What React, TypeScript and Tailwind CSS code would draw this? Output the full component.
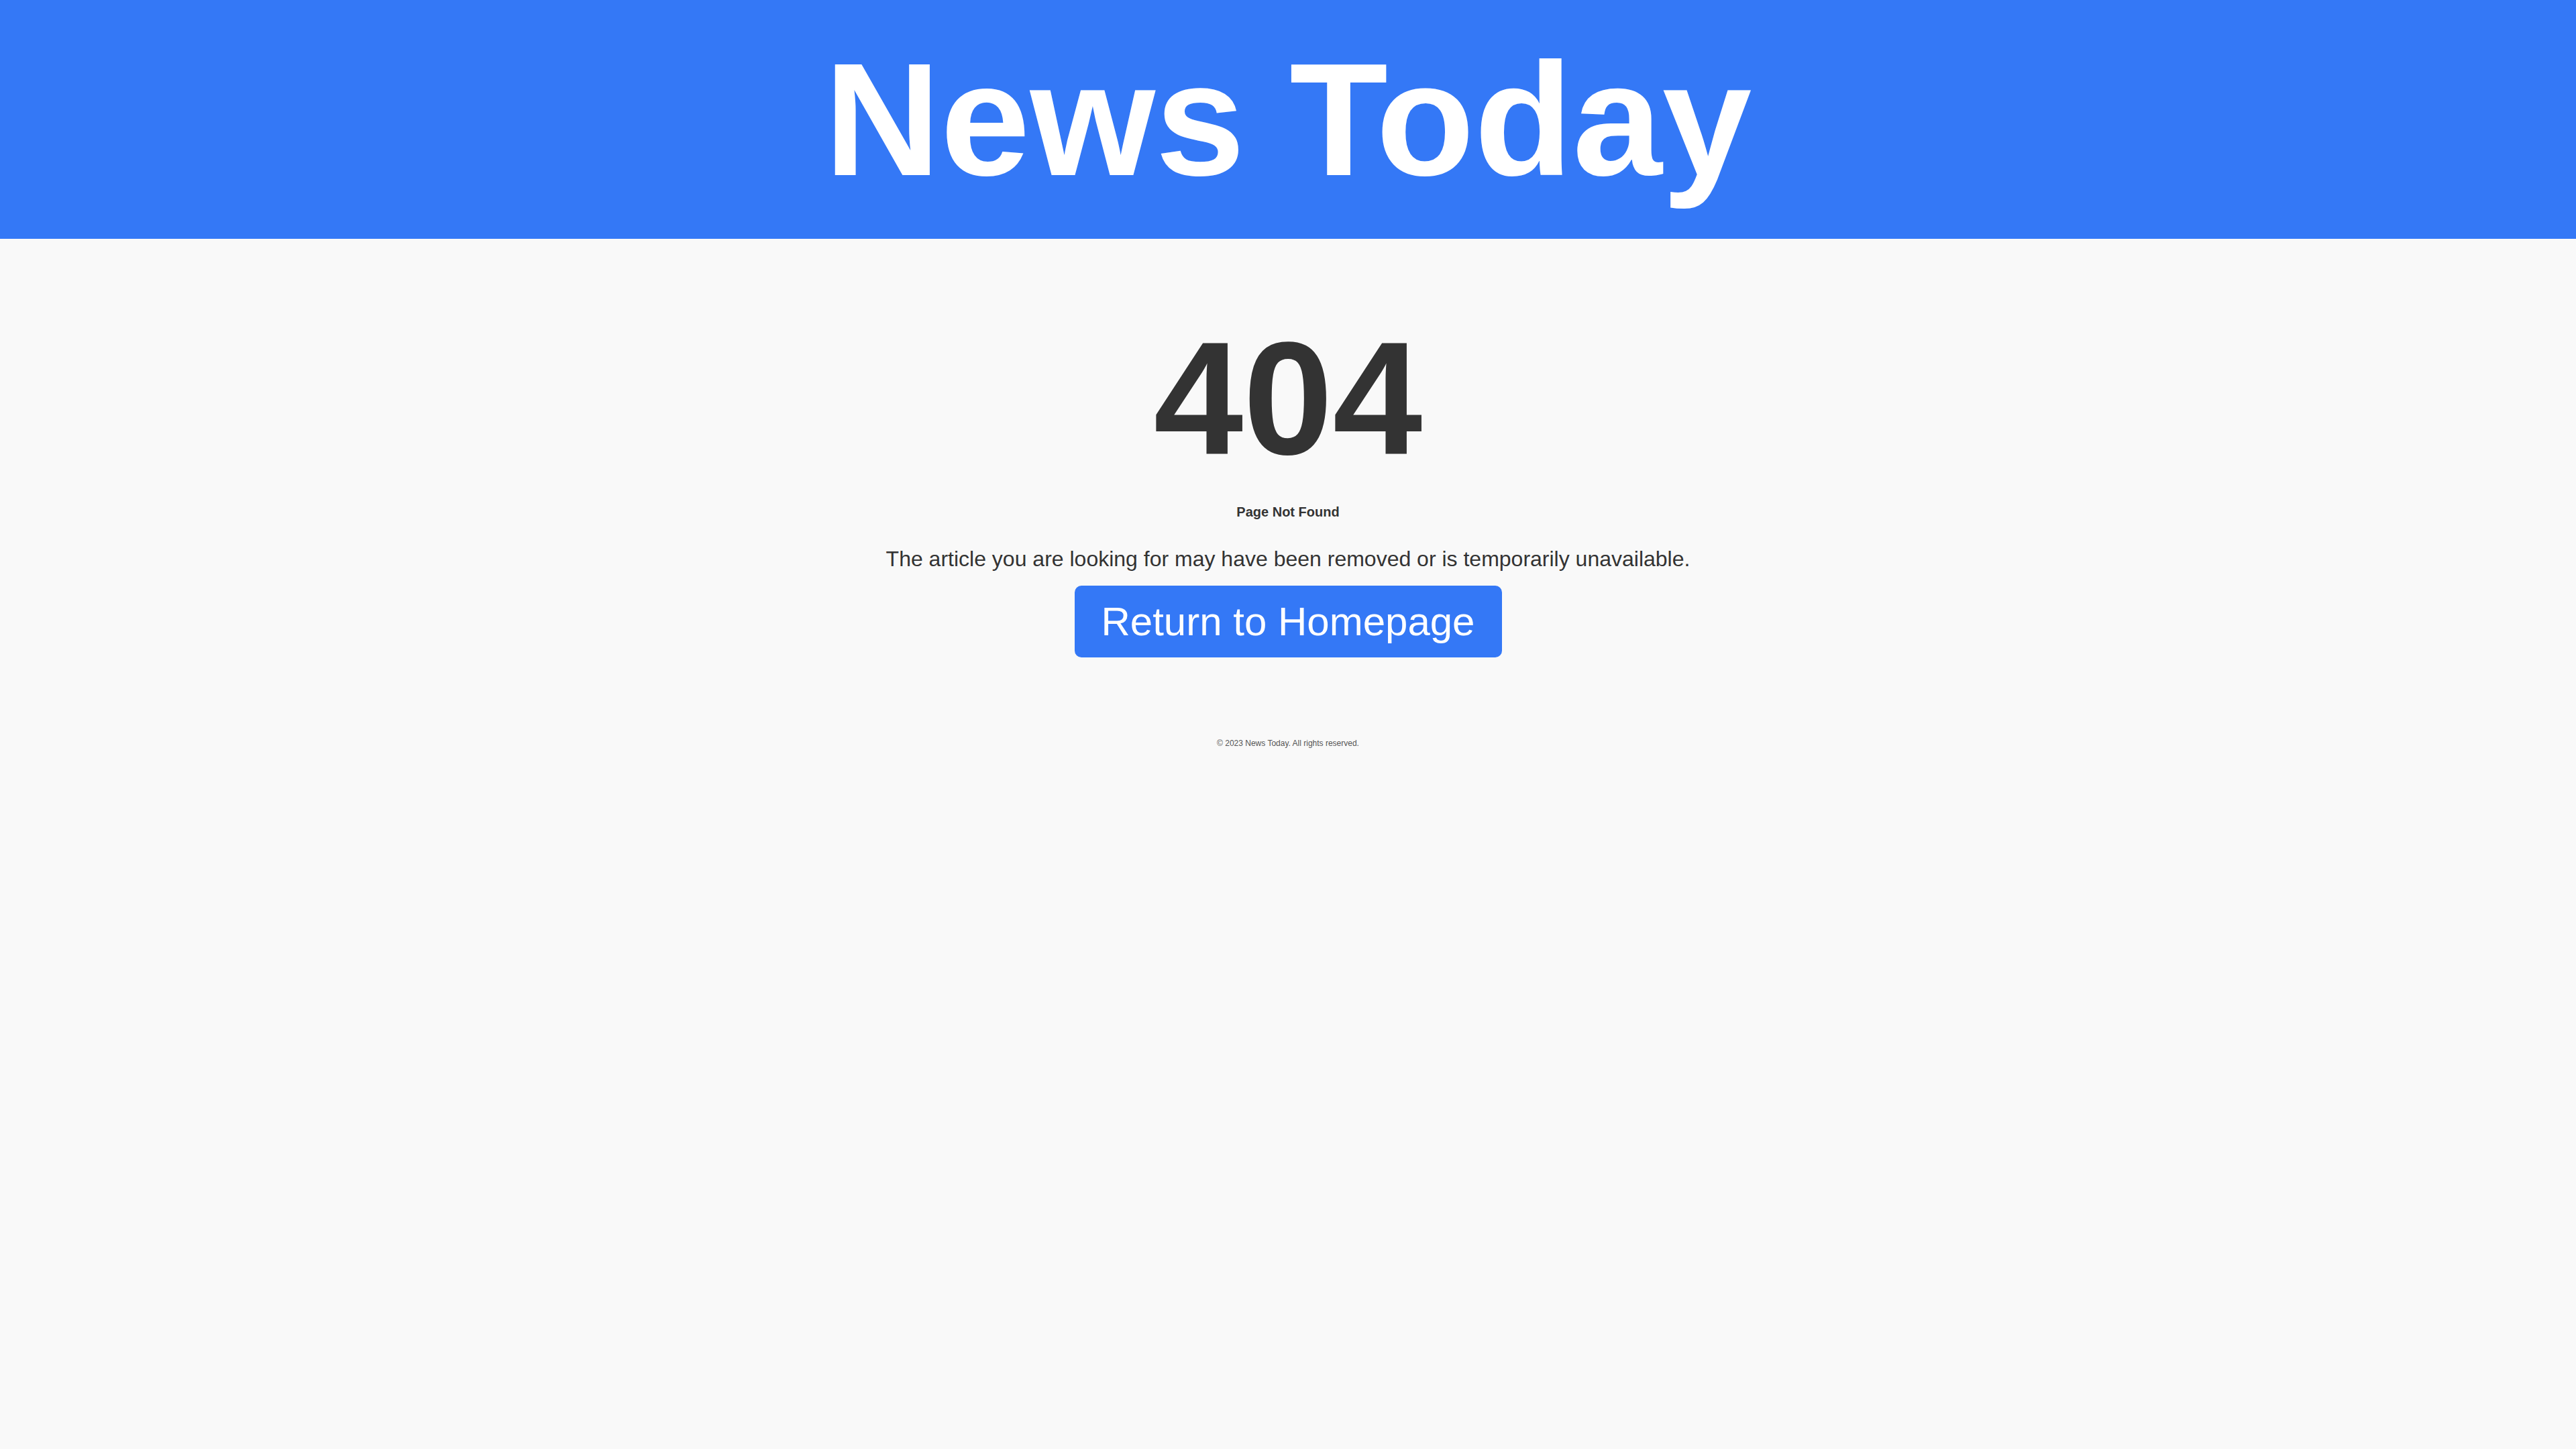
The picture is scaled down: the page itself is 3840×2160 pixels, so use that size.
export default function App() {
  return (
    <div className="min-h-screen bg-[#f9f9f9] text-center font-['Liberation_Sans',Arial,sans-serif] text-[#333333]">
      <header className="bg-[#3478f6] py-10 text-white">
        <h1 className="text-[240px] leading-[276px] font-bold">News Today</h1>
      </header>
      <main className="flex flex-col items-center pt-[100px]">
        <h2 className="text-[240px] leading-[276px] font-bold">404</h2>
        <h3 className="mt-5 text-[20px] leading-[23px] font-bold">Page Not Found</h3>
        <p className="mt-10 text-[32px] leading-[36px]">
          The article you are looking for may have been removed or is temporarily unavailable.
        </p>
        <a href="/" className="mt-[22px] rounded-[10px] bg-[#3478f6] px-10 py-5 text-[60px] leading-[67px] text-white">
          Return to Homepage
        </a>
      </main>
      <footer className="mt-[120px] text-xs text-[#555555]">© 2023 News Today. All rights reserved.</footer>
    </div>
  );
}
